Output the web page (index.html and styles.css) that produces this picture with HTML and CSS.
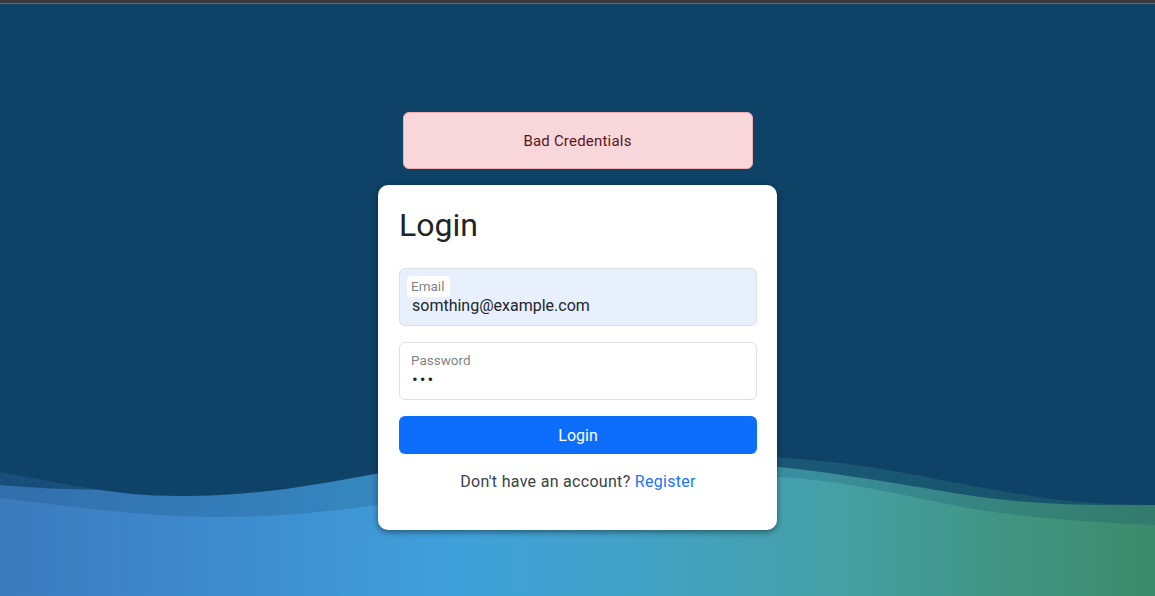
FILE: index.html
```html
<!DOCTYPE html>
<html lang="en">
<head>
<meta charset="utf-8">
<title>Login</title>
<link rel="stylesheet" href="styles.css">
</head>
<body>
<div class="topbar"></div>
<svg class="waves" viewBox="0 0 1155 156" preserveAspectRatio="none" aria-hidden="true">
  <defs>
    <linearGradient id="sea" x1="0" y1="0" x2="1" y2="0">
      <stop offset="0" stop-color="#3b7abd"/>
      <stop offset="0.2" stop-color="#3e8cce"/>
      <stop offset="0.4" stop-color="#40a1da"/>
      <stop offset="0.55" stop-color="#42a2c6"/>
      <stop offset="0.72" stop-color="#45a0a6"/>
      <stop offset="0.88" stop-color="#40947f"/>
      <stop offset="1" stop-color="#3c8a6c"/>
    </linearGradient>
  </defs>
  <rect x="0" y="0" width="1155" height="156" fill="url(#sea)"/>
  <path fill="#0e4267" fill-opacity="0.2" d="M0,0 L0,58 C70,66 140,77 220,77 C290,77 340,70 400,62 C520,46 660,30 780,37 C860,42 920,60 980,70 C1040,79 1100,83 1155,85 L1155,0 Z"/>
  <path fill="#0e4267" fill-opacity="0.72" d="M0,0 L0,45 C60,50 120,52 200,46 C280,40 330,30 400,24 C560,12 700,18 780,27 C860,36 920,48 980,57 C1040,65 1100,66 1155,64 L1155,0 Z"/>
  <path fill="#0e4267" d="M0,0 L0,32 C60,42 110,56 180,56 C260,56 320,44 380,33 C450,20 550,12 680,13 C740,13 790,18 840,23 C920,33 980,50 1060,60 C1100,64 1130,65 1155,65 L1155,0 Z"/>
</svg>
<main class="page">
  <div class="alert" role="alert">Bad Credentials</div>
  <section class="card">
    <h1 class="title">Login</h1>
    <form class="form">
      <div class="field field-autofill">
        <input class="input" type="email" id="email" value="somthing@example.com">
        <label class="label" for="email">Email</label>
      </div>
      <div class="field">
        <input class="input input-password" type="password" id="password" value="abc">
        <label class="label" for="password">Password</label>
      </div>
      <button class="btn" type="button">Login</button>
      <p class="alt">Don't have an account? <a class="link" href="#">Register</a></p>
    </form>
  </section>
</main>
</body>
</html>
```
FILE: styles.css
```css
* { box-sizing: border-box; }

html, body {
  margin: 0;
  height: 596px;
  overflow: hidden;
}

body {
  position: relative;
  background: #0e4267;
  font-family: Roboto, "Liberation Sans", sans-serif;
  color: #212529;
}

.topbar {
  height: 4px;
  background: #3b3b3b;
  border-bottom: 1px solid #6b6b6b;
}

.waves {
  position: absolute;
  left: 0;
  bottom: 0;
  width: 100%;
  height: 156px;
  display: block;
  z-index: 0;
}

.page {
  position: relative;
  z-index: 1;
  display: flex;
  flex-direction: column;
  align-items: center;
  padding-top: 108px;
}

.alert {
  width: 350px;
  height: 57px;
  display: flex;
  align-items: center;
  justify-content: center;
  background: #f8d7da;
  border: 1px solid #f1aeb5;
  border-radius: 6px;
  color: #58151c;
  font-size: 15px;
  letter-spacing: 0.2px;
  margin-bottom: 16px;
}

.card {
  width: 399px;
  background: #fff;
  border-radius: 10px;
  padding: 21px 20px 20px 21px;
  box-shadow: 0 2px 6px rgba(0, 0, 0, 0.45);
}

.title {
  margin: 0 0 24px;
  font-size: 32px;
  font-weight: 400;
  line-height: 38px;
  color: #212529;
}

.form {
  display: flex;
  flex-direction: column;
  gap: 16px;
}

.field {
  position: relative;
  height: 58px;
}

.input {
  width: 100%;
  height: 58px;
  border: 1px solid #dee2e6;
  border-radius: 6px;
  padding: 24px 12px 8px 12px;
  font-family: inherit;
  font-size: 16px;
  line-height: 24px;
  color: #212529;
  background: #fff;
  outline: none;
}

.input-password {
  letter-spacing: 2px;
  font-size: 17px;
}

.field-autofill .input {
  background: #e8f0fe;
}

.label {
  position: absolute;
  top: 8px;
  left: 8px;
  height: 21px;
  line-height: 21px;
  padding: 0 6px 0 4px;
  font-size: 13.5px;
  color: rgba(33, 37, 41, 0.6);
  background: #fff;
  border-radius: 4px;
}

.btn {
  height: 38px;
  width: 100%;
  border: none;
  border-radius: 6px;
  background: #0d6efd;
  color: #fff;
  font-family: inherit;
  font-size: 16px;
}

.alt {
  margin: 0 0 16px;
  text-align: center;
  font-size: 16px;
  line-height: 24px;
  letter-spacing: 0.3px;
  color: #3a3f44;
}

.link {
  color: #1a73f8;
  text-decoration: none;
}
```
